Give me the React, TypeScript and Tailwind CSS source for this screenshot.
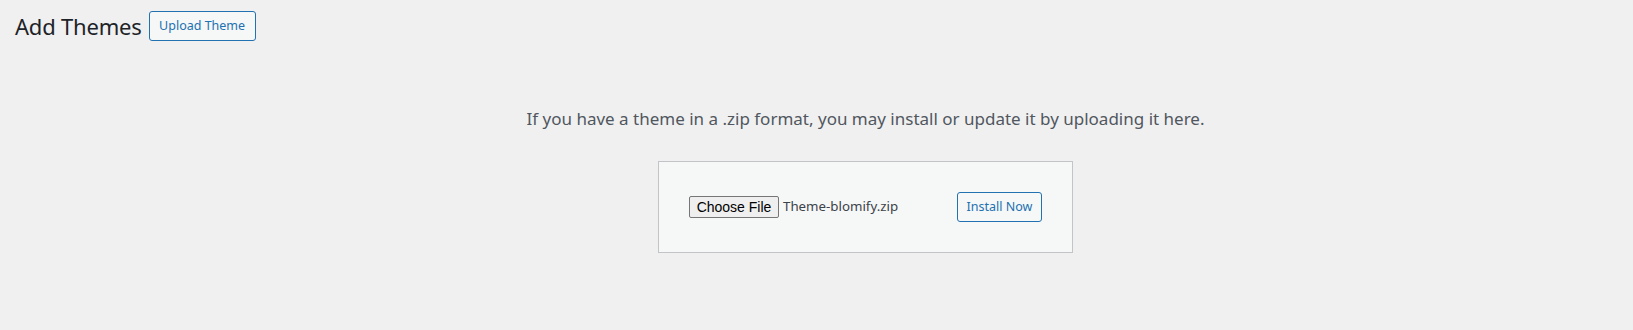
import React from "react";

export default function App() {
  return (
    <div
      className="w-[1633px] h-[330px] bg-[#f0f0f1] text-[#3c434a] overflow-hidden"
      style={{ fontFamily: '"Noto Sans", "Open Sans", sans-serif' }}
    >
      <div className="flex items-center pl-[15px] pt-[11px]">
        <h1 className="text-[22px] leading-[30px] tracking-[-0.2px] font-normal text-[#1d2327] m-0">Add Themes</h1>
        <button className="ml-[7px] w-[107px] h-[30px] flex items-center justify-center text-[12.5px] leading-none text-[#2271b1] border border-[#2271b1] rounded-[3px] bg-[#f6f7f7]">
          Upload Theme
        </button>
      </div>
      <div className="flex flex-col items-center pl-[98px]">
        <p className="mt-[67px] text-[17px] leading-[22px] text-[#50575e] text-center whitespace-nowrap">
          If you have a theme in a .zip format, you may install or update it by uploading it here.
        </p>
        <div className="mt-[31px] w-[415px] h-[92px] border border-[#c3c4c7] bg-[#f6f7f7] flex items-center justify-between px-[30px]">
          <div className="flex items-center">
            <span
              className="w-[90px] h-[22px] flex items-center justify-center text-[14px] text-black bg-[#efefef] border border-[#767676] rounded-[2px]"
              style={{ fontFamily: '"Liberation Sans", Arial, sans-serif' }}
            >
              Choose File
            </span>
            <span className="ml-[4px] text-[13.3px] text-[#3c434a]">Theme-blomify.zip</span>
          </div>
          <button className="w-[85px] h-[30px] flex items-center justify-center text-[12.5px] leading-none text-[#2271b1] border border-[#2271b1] rounded-[3px] bg-[#f6f7f7]">
            Install Now
          </button>
        </div>
      </div>
    </div>
  );
}
